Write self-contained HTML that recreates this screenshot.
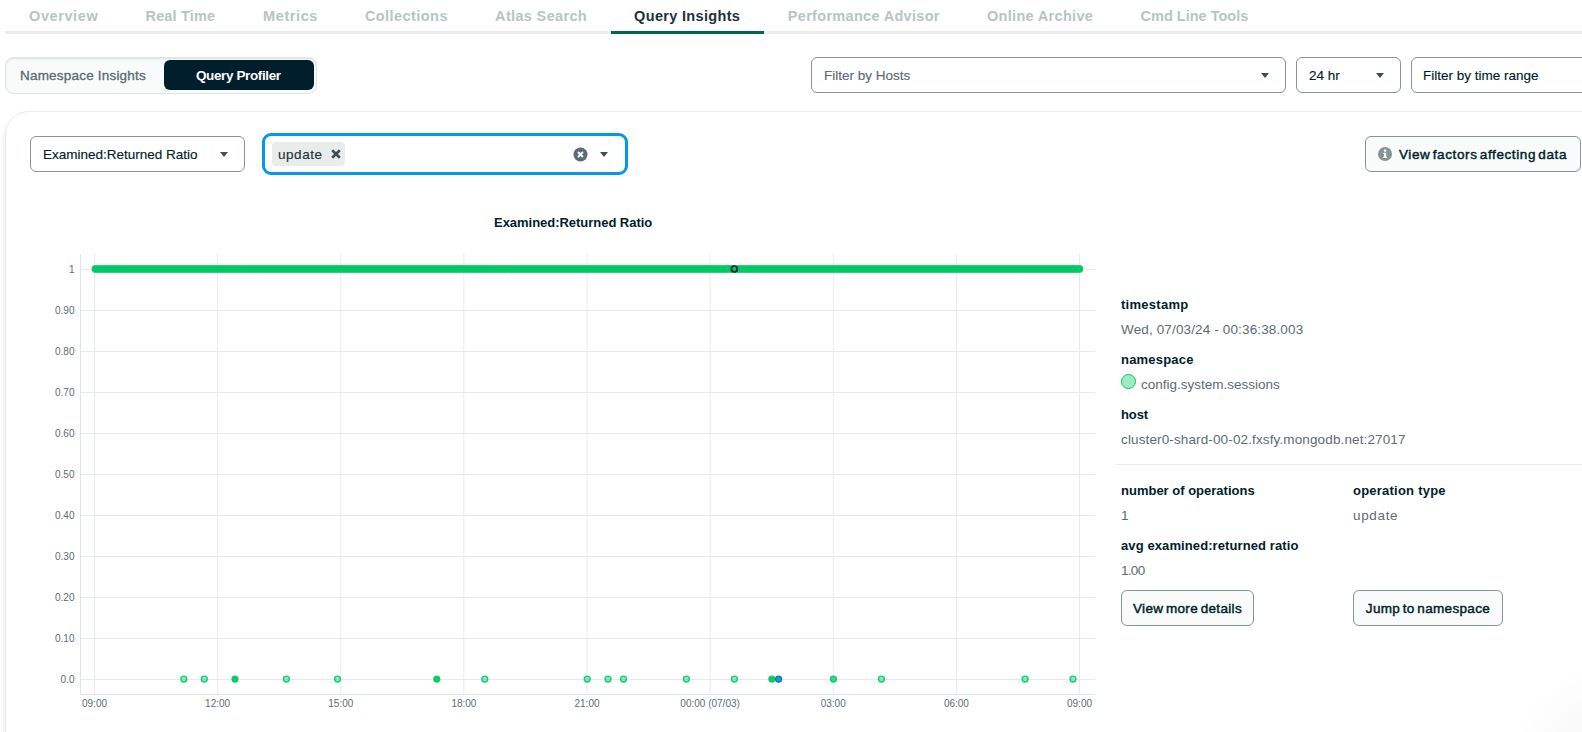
<!DOCTYPE html>
<html lang="en">
<head>
<meta charset="utf-8">
<title>Query Insights</title>
<style>
*{box-sizing:border-box;margin:0;padding:0}
html,body{width:1582px;height:732px;overflow:hidden;background:#fff}
body{font-family:"Liberation Sans",sans-serif;color:#001e2b;position:relative;font-size:13px}
.abs{position:absolute;white-space:nowrap}
.tabline{left:5px;top:31px;width:1577px;height:3px;background:#e8edeb}
.tabactive{left:611px;top:31px;width:153px;height:3px;background:#00684a}
.tab{top:6px;font-size:14.5px;line-height:20px;font-weight:bold;color:#b8c4c2;letter-spacing:-0.2px}
.tab.on{color:#21313c}
.seg{left:5px;top:57px;width:312px;height:37px;border:1px solid #e1e6e4;border-radius:8px;background:#f9fbfa;box-shadow:0 1px 2px rgba(0,30,43,.12) inset}
.segon{left:164px;top:60px;width:150px;height:30px;border-radius:6px;background:#001e2b}
.segt{top:67px;font-size:13.5px;line-height:18px;color:#3d4f58}
.sel{border:1px solid #889397;border-radius:6px;background:#fff;height:36px}
.selt{font-size:13.5px;line-height:18px;color:#5c6c75;-webkit-text-stroke:0.15px currentColor}
.caret{width:0;height:0;border-left:4px solid transparent;border-right:4px solid transparent;border-top:5px solid #3d4f58}
.card{left:5px;top:111px;width:1620px;height:700px;border:1px solid #e8edeb;border-radius:24px;background:#fff;box-shadow:0 4px 10px -4px rgba(0,30,43,.3)}
.chart{position:absolute;left:0;top:240px}
.ax{font-family:"Liberation Sans",sans-serif;font-size:10px;fill:#5c6c75}
.lbl{font-size:13px;line-height:16px;font-weight:bold;color:#001e2b;letter-spacing:0.1px;margin-top:1px}
.val{font-size:13.5px;line-height:16px;color:#5c6c75;margin-top:1px}
.btn{border:1px solid #889397;border-radius:6px;background:#f9fbfa;height:36px;font-size:13.5px;color:#001e2b;line-height:36px;text-align:center;letter-spacing:0.34px;word-spacing:-1.5px;-webkit-text-stroke:0.45px #001e2b}
</style>
</head>
<body>
<!-- tabs -->
<div class="abs tabline"></div>
<div class="abs tabactive"></div>
<div class="abs tab" style="left:29.0px;letter-spacing:0.60px">Overview</div>
<div class="abs tab" style="left:145.5px;letter-spacing:0.16px">Real Time</div>
<div class="abs tab" style="left:263.1px;letter-spacing:0.59px">Metrics</div>
<div class="abs tab" style="left:364.9px;letter-spacing:0.44px">Collections</div>
<div class="abs tab" style="left:495.1px;letter-spacing:0.34px">Atlas Search</div>
<div class="abs tab on" style="left:634.1px;letter-spacing:0.33px">Query Insights</div>
<div class="abs tab" style="left:787.8px;letter-spacing:0.31px">Performance Advisor</div>
<div class="abs tab" style="left:987.0px;letter-spacing:0.31px">Online Archive</div>
<div class="abs tab" style="left:1140.6px;letter-spacing:0.00px">Cmd Line Tools</div>

<!-- segmented control -->
<div class="abs seg"></div>
<div class="abs segon"></div>
<div class="abs segt" style="left:20px;letter-spacing:0.2px;color:#5c6c75;-webkit-text-stroke:0.35px #5c6c75">Namespace Insights</div>
<div class="abs segt" style="left:196px;color:#fff;font-weight:bold;letter-spacing:-0.38px">Query Profiler</div>

<!-- top filters -->
<div class="abs sel" style="left:811px;top:57px;width:475px"></div>
<div class="abs selt" style="left:824px;top:67px">Filter by Hosts</div>
<div class="abs caret" style="left:1261px;top:73px"></div>
<div class="abs sel" style="left:1296px;top:57px;width:105px"></div>
<div class="abs selt" style="left:1309px;top:67px;color:#001e2b">24 hr</div>
<div class="abs caret" style="left:1376px;top:73px"></div>
<div class="abs sel" style="left:1411px;top:57px;width:200px"></div>
<div class="abs selt" style="left:1423px;top:67px;color:#001e2b">Filter by time range</div>

<!-- card -->
<div class="abs card"></div>

<div class="abs sel" style="left:30px;top:136px;width:215px"></div>
<div class="abs selt" style="left:43px;top:146px;color:#001e2b">Examined:Returned Ratio</div>
<div class="abs caret" style="left:220px;top:152px"></div>

<div class="abs" style="left:262px;top:133px;width:366px;height:42px;border:3px solid #0498ec;border-radius:9px;background:#fff"></div>
<div class="abs" style="left:272px;top:142px;width:73px;height:24px;border-radius:4px;background:#e8edeb"></div>
<div class="abs selt" style="left:278px;top:146px;color:#21313c;letter-spacing:0.55px">update</div>
<svg class="abs" style="left:329.5px;top:148.3px" width="12" height="12" viewBox="0 0 12 12"><path d="M2.2 2.2 L9.8 9.8 M9.8 2.2 L2.2 9.8" stroke="#3d4f58" stroke-width="2.7" fill="none"/></svg>
<svg class="abs" style="left:572.5px;top:146.5px" width="15" height="15" viewBox="0 0 15 15"><circle cx="7.5" cy="7.5" r="7" fill="#5c6c75"/><path d="M5 5 L10 10 M10 5 L5 10" stroke="#fff" stroke-width="1.9" fill="none"/></svg>
<div class="abs caret" style="left:600px;top:152px"></div>

<div class="abs btn" style="left:1365px;top:136px;width:216px"></div>
<svg class="abs" style="left:1378px;top:147px" width="14" height="14" viewBox="0 0 14 14"><circle cx="7" cy="7" r="7" fill="#889397"/><rect x="6" y="5.8" width="2.2" height="5" fill="#fff"/><rect x="5" y="5.8" width="2" height="1.2" fill="#fff"/><rect x="5" y="9.8" width="4.2" height="1.2" fill="#fff"/><rect x="5.9" y="2.5" width="2.3" height="2.2" fill="#fff"/></svg>
<div class="abs" style="left:1399px;top:146px;font-size:13.5px;line-height:18px;color:#001e2b;letter-spacing:0.6px;word-spacing:-2px;-webkit-text-stroke:0.45px #001e2b">View factors affecting data</div>

<div class="abs" style="left:494px;top:215px;font-size:13px;line-height:16px;font-weight:bold;color:#001e2b;letter-spacing:-0.03px">Examined:Returned Ratio</div>

<svg class="chart" width="1120" height="490" viewBox="0 240 1120 490">
<g stroke="#e6ebe9" stroke-width="1">
<line x1="94.50" y1="254" x2="94.50" y2="694"/>
<line x1="217.62" y1="254" x2="217.62" y2="694"/>
<line x1="340.75" y1="254" x2="340.75" y2="694"/>
<line x1="463.88" y1="254" x2="463.88" y2="694"/>
<line x1="587.00" y1="254" x2="587.00" y2="694"/>
<line x1="710.12" y1="254" x2="710.12" y2="694"/>
<line x1="833.25" y1="254" x2="833.25" y2="694"/>
<line x1="956.38" y1="254" x2="956.38" y2="694"/>
<line x1="1079.50" y1="254" x2="1079.50" y2="694"/>
<line x1="80" y1="269.5" x2="1095" y2="269.5"/>
<line x1="80" y1="310.5" x2="1095" y2="310.5"/>
<line x1="80" y1="351.5" x2="1095" y2="351.5"/>
<line x1="80" y1="392.5" x2="1095" y2="392.5"/>
<line x1="80" y1="433.5" x2="1095" y2="433.5"/>
<line x1="80" y1="474.5" x2="1095" y2="474.5"/>
<line x1="80" y1="515.5" x2="1095" y2="515.5"/>
<line x1="80" y1="556.5" x2="1095" y2="556.5"/>
<line x1="80" y1="597.5" x2="1095" y2="597.5"/>
<line x1="80" y1="638.5" x2="1095" y2="638.5"/>
<line x1="80" y1="679.5" x2="1095" y2="679.5"/>
</g>
<line x1="80.5" y1="254" x2="80.5" y2="695" stroke="#dfe5e3" stroke-width="1"/>
<line x1="80" y1="694.5" x2="1095" y2="694.5" stroke="#dfe5e3" stroke-width="1"/>
<g class="ax" text-anchor="end">
<text x="74.5" y="273.0">1</text>
<text x="74.5" y="314.0">0.90</text>
<text x="74.5" y="355.0">0.80</text>
<text x="74.5" y="396.0">0.70</text>
<text x="74.5" y="437.0">0.60</text>
<text x="74.5" y="478.0">0.50</text>
<text x="74.5" y="519.0">0.40</text>
<text x="74.5" y="560.0">0.30</text>
<text x="74.5" y="601.0">0.20</text>
<text x="74.5" y="642.0">0.10</text>
<text x="74.5" y="683.0">0.0</text>
</g>
<g class="ax" text-anchor="middle">
<text x="94.5" y="707">09:00</text>
<text x="217.6" y="707">12:00</text>
<text x="340.8" y="707">15:00</text>
<text x="463.9" y="707">18:00</text>
<text x="587.0" y="707">21:00</text>
<text x="710.1" y="707">00:00 (07/03)</text>
<text x="833.2" y="707">03:00</text>
<text x="956.4" y="707">06:00</text>
<text x="1079.5" y="707">09:00</text>
</g>
<line x1="95.4" y1="269" x2="1079.4" y2="269" stroke="#00c864" stroke-width="6" stroke-linecap="round"/>
<g fill="#00c864" fill-opacity="0.6" stroke="#00c864" stroke-width="1.2" stroke-opacity="0.8">
<circle cx="95.4" cy="269" r="3.3"/>
<circle cx="98.4" cy="269" r="3.3"/>
<circle cx="101.4" cy="269" r="3.3"/>
<circle cx="104.4" cy="269" r="3.3"/>
<circle cx="107.4" cy="269" r="3.3"/>
<circle cx="110.4" cy="269" r="3.3"/>
<circle cx="113.4" cy="269" r="3.3"/>
<circle cx="116.4" cy="269" r="3.3"/>
<circle cx="119.4" cy="269" r="3.3"/>
<circle cx="122.4" cy="269" r="3.3"/>
<circle cx="125.4" cy="269" r="3.3"/>
<circle cx="128.4" cy="269" r="3.3"/>
<circle cx="131.4" cy="269" r="3.3"/>
<circle cx="134.4" cy="269" r="3.3"/>
<circle cx="137.4" cy="269" r="3.3"/>
<circle cx="140.4" cy="269" r="3.3"/>
<circle cx="143.4" cy="269" r="3.3"/>
<circle cx="146.4" cy="269" r="3.3"/>
<circle cx="149.4" cy="269" r="3.3"/>
<circle cx="152.4" cy="269" r="3.3"/>
<circle cx="155.4" cy="269" r="3.3"/>
<circle cx="158.4" cy="269" r="3.3"/>
<circle cx="161.4" cy="269" r="3.3"/>
<circle cx="164.4" cy="269" r="3.3"/>
<circle cx="167.4" cy="269" r="3.3"/>
<circle cx="170.4" cy="269" r="3.3"/>
<circle cx="173.4" cy="269" r="3.3"/>
<circle cx="176.4" cy="269" r="3.3"/>
<circle cx="179.4" cy="269" r="3.3"/>
<circle cx="182.4" cy="269" r="3.3"/>
<circle cx="185.4" cy="269" r="3.3"/>
<circle cx="188.4" cy="269" r="3.3"/>
<circle cx="191.4" cy="269" r="3.3"/>
<circle cx="194.4" cy="269" r="3.3"/>
<circle cx="197.4" cy="269" r="3.3"/>
<circle cx="200.4" cy="269" r="3.3"/>
<circle cx="203.4" cy="269" r="3.3"/>
<circle cx="206.4" cy="269" r="3.3"/>
<circle cx="209.4" cy="269" r="3.3"/>
<circle cx="212.4" cy="269" r="3.3"/>
<circle cx="215.4" cy="269" r="3.3"/>
<circle cx="218.4" cy="269" r="3.3"/>
<circle cx="221.4" cy="269" r="3.3"/>
<circle cx="224.4" cy="269" r="3.3"/>
<circle cx="227.4" cy="269" r="3.3"/>
<circle cx="230.4" cy="269" r="3.3"/>
<circle cx="233.4" cy="269" r="3.3"/>
<circle cx="236.4" cy="269" r="3.3"/>
<circle cx="239.4" cy="269" r="3.3"/>
<circle cx="242.4" cy="269" r="3.3"/>
<circle cx="245.4" cy="269" r="3.3"/>
<circle cx="248.4" cy="269" r="3.3"/>
<circle cx="251.4" cy="269" r="3.3"/>
<circle cx="254.4" cy="269" r="3.3"/>
<circle cx="257.4" cy="269" r="3.3"/>
<circle cx="260.4" cy="269" r="3.3"/>
<circle cx="263.4" cy="269" r="3.3"/>
<circle cx="266.4" cy="269" r="3.3"/>
<circle cx="269.4" cy="269" r="3.3"/>
<circle cx="272.4" cy="269" r="3.3"/>
<circle cx="275.4" cy="269" r="3.3"/>
<circle cx="278.4" cy="269" r="3.3"/>
<circle cx="281.4" cy="269" r="3.3"/>
<circle cx="284.4" cy="269" r="3.3"/>
<circle cx="287.4" cy="269" r="3.3"/>
<circle cx="290.4" cy="269" r="3.3"/>
<circle cx="293.4" cy="269" r="3.3"/>
<circle cx="296.4" cy="269" r="3.3"/>
<circle cx="299.4" cy="269" r="3.3"/>
<circle cx="302.4" cy="269" r="3.3"/>
<circle cx="305.4" cy="269" r="3.3"/>
<circle cx="308.4" cy="269" r="3.3"/>
<circle cx="311.4" cy="269" r="3.3"/>
<circle cx="314.4" cy="269" r="3.3"/>
<circle cx="317.4" cy="269" r="3.3"/>
<circle cx="320.4" cy="269" r="3.3"/>
<circle cx="323.4" cy="269" r="3.3"/>
<circle cx="326.4" cy="269" r="3.3"/>
<circle cx="329.4" cy="269" r="3.3"/>
<circle cx="332.4" cy="269" r="3.3"/>
<circle cx="335.4" cy="269" r="3.3"/>
<circle cx="338.4" cy="269" r="3.3"/>
<circle cx="341.4" cy="269" r="3.3"/>
<circle cx="344.4" cy="269" r="3.3"/>
<circle cx="347.4" cy="269" r="3.3"/>
<circle cx="350.4" cy="269" r="3.3"/>
<circle cx="353.4" cy="269" r="3.3"/>
<circle cx="356.4" cy="269" r="3.3"/>
<circle cx="359.4" cy="269" r="3.3"/>
<circle cx="362.4" cy="269" r="3.3"/>
<circle cx="365.4" cy="269" r="3.3"/>
<circle cx="368.4" cy="269" r="3.3"/>
<circle cx="371.4" cy="269" r="3.3"/>
<circle cx="374.4" cy="269" r="3.3"/>
<circle cx="377.4" cy="269" r="3.3"/>
<circle cx="380.4" cy="269" r="3.3"/>
<circle cx="383.4" cy="269" r="3.3"/>
<circle cx="386.4" cy="269" r="3.3"/>
<circle cx="389.4" cy="269" r="3.3"/>
<circle cx="392.4" cy="269" r="3.3"/>
<circle cx="395.4" cy="269" r="3.3"/>
<circle cx="398.4" cy="269" r="3.3"/>
<circle cx="401.4" cy="269" r="3.3"/>
<circle cx="404.4" cy="269" r="3.3"/>
<circle cx="407.4" cy="269" r="3.3"/>
<circle cx="410.4" cy="269" r="3.3"/>
<circle cx="413.4" cy="269" r="3.3"/>
<circle cx="416.4" cy="269" r="3.3"/>
<circle cx="419.4" cy="269" r="3.3"/>
<circle cx="422.4" cy="269" r="3.3"/>
<circle cx="425.4" cy="269" r="3.3"/>
<circle cx="428.4" cy="269" r="3.3"/>
<circle cx="431.4" cy="269" r="3.3"/>
<circle cx="434.4" cy="269" r="3.3"/>
<circle cx="437.4" cy="269" r="3.3"/>
<circle cx="440.4" cy="269" r="3.3"/>
<circle cx="443.4" cy="269" r="3.3"/>
<circle cx="446.4" cy="269" r="3.3"/>
<circle cx="449.4" cy="269" r="3.3"/>
<circle cx="452.4" cy="269" r="3.3"/>
<circle cx="455.4" cy="269" r="3.3"/>
<circle cx="458.4" cy="269" r="3.3"/>
<circle cx="461.4" cy="269" r="3.3"/>
<circle cx="464.4" cy="269" r="3.3"/>
<circle cx="467.4" cy="269" r="3.3"/>
<circle cx="470.4" cy="269" r="3.3"/>
<circle cx="473.4" cy="269" r="3.3"/>
<circle cx="476.4" cy="269" r="3.3"/>
<circle cx="479.4" cy="269" r="3.3"/>
<circle cx="482.4" cy="269" r="3.3"/>
<circle cx="485.4" cy="269" r="3.3"/>
<circle cx="488.4" cy="269" r="3.3"/>
<circle cx="491.4" cy="269" r="3.3"/>
<circle cx="494.4" cy="269" r="3.3"/>
<circle cx="497.4" cy="269" r="3.3"/>
<circle cx="500.4" cy="269" r="3.3"/>
<circle cx="503.4" cy="269" r="3.3"/>
<circle cx="506.4" cy="269" r="3.3"/>
<circle cx="509.4" cy="269" r="3.3"/>
<circle cx="512.4" cy="269" r="3.3"/>
<circle cx="515.4" cy="269" r="3.3"/>
<circle cx="518.4" cy="269" r="3.3"/>
<circle cx="521.4" cy="269" r="3.3"/>
<circle cx="524.4" cy="269" r="3.3"/>
<circle cx="527.4" cy="269" r="3.3"/>
<circle cx="530.4" cy="269" r="3.3"/>
<circle cx="533.4" cy="269" r="3.3"/>
<circle cx="536.4" cy="269" r="3.3"/>
<circle cx="539.4" cy="269" r="3.3"/>
<circle cx="542.4" cy="269" r="3.3"/>
<circle cx="545.4" cy="269" r="3.3"/>
<circle cx="548.4" cy="269" r="3.3"/>
<circle cx="551.4" cy="269" r="3.3"/>
<circle cx="554.4" cy="269" r="3.3"/>
<circle cx="557.4" cy="269" r="3.3"/>
<circle cx="560.4" cy="269" r="3.3"/>
<circle cx="563.4" cy="269" r="3.3"/>
<circle cx="566.4" cy="269" r="3.3"/>
<circle cx="569.4" cy="269" r="3.3"/>
<circle cx="572.4" cy="269" r="3.3"/>
<circle cx="575.4" cy="269" r="3.3"/>
<circle cx="578.4" cy="269" r="3.3"/>
<circle cx="581.4" cy="269" r="3.3"/>
<circle cx="584.4" cy="269" r="3.3"/>
<circle cx="587.4" cy="269" r="3.3"/>
<circle cx="590.4" cy="269" r="3.3"/>
<circle cx="593.4" cy="269" r="3.3"/>
<circle cx="596.4" cy="269" r="3.3"/>
<circle cx="599.4" cy="269" r="3.3"/>
<circle cx="602.4" cy="269" r="3.3"/>
<circle cx="605.4" cy="269" r="3.3"/>
<circle cx="608.4" cy="269" r="3.3"/>
<circle cx="611.4" cy="269" r="3.3"/>
<circle cx="614.4" cy="269" r="3.3"/>
<circle cx="617.4" cy="269" r="3.3"/>
<circle cx="620.4" cy="269" r="3.3"/>
<circle cx="623.4" cy="269" r="3.3"/>
<circle cx="626.4" cy="269" r="3.3"/>
<circle cx="629.4" cy="269" r="3.3"/>
<circle cx="632.4" cy="269" r="3.3"/>
<circle cx="635.4" cy="269" r="3.3"/>
<circle cx="638.4" cy="269" r="3.3"/>
<circle cx="641.4" cy="269" r="3.3"/>
<circle cx="644.4" cy="269" r="3.3"/>
<circle cx="647.4" cy="269" r="3.3"/>
<circle cx="650.4" cy="269" r="3.3"/>
<circle cx="653.4" cy="269" r="3.3"/>
<circle cx="656.4" cy="269" r="3.3"/>
<circle cx="659.4" cy="269" r="3.3"/>
<circle cx="662.4" cy="269" r="3.3"/>
<circle cx="665.4" cy="269" r="3.3"/>
<circle cx="668.4" cy="269" r="3.3"/>
<circle cx="671.4" cy="269" r="3.3"/>
<circle cx="674.4" cy="269" r="3.3"/>
<circle cx="677.4" cy="269" r="3.3"/>
<circle cx="680.4" cy="269" r="3.3"/>
<circle cx="683.4" cy="269" r="3.3"/>
<circle cx="686.4" cy="269" r="3.3"/>
<circle cx="689.4" cy="269" r="3.3"/>
<circle cx="692.4" cy="269" r="3.3"/>
<circle cx="695.4" cy="269" r="3.3"/>
<circle cx="698.4" cy="269" r="3.3"/>
<circle cx="701.4" cy="269" r="3.3"/>
<circle cx="704.4" cy="269" r="3.3"/>
<circle cx="707.4" cy="269" r="3.3"/>
<circle cx="710.4" cy="269" r="3.3"/>
<circle cx="713.4" cy="269" r="3.3"/>
<circle cx="716.4" cy="269" r="3.3"/>
<circle cx="719.4" cy="269" r="3.3"/>
<circle cx="722.4" cy="269" r="3.3"/>
<circle cx="725.4" cy="269" r="3.3"/>
<circle cx="728.4" cy="269" r="3.3"/>
<circle cx="731.4" cy="269" r="3.3"/>
<circle cx="734.4" cy="269" r="3.3"/>
<circle cx="737.4" cy="269" r="3.3"/>
<circle cx="740.4" cy="269" r="3.3"/>
<circle cx="743.4" cy="269" r="3.3"/>
<circle cx="746.4" cy="269" r="3.3"/>
<circle cx="749.4" cy="269" r="3.3"/>
<circle cx="752.4" cy="269" r="3.3"/>
<circle cx="755.4" cy="269" r="3.3"/>
<circle cx="758.4" cy="269" r="3.3"/>
<circle cx="761.4" cy="269" r="3.3"/>
<circle cx="764.4" cy="269" r="3.3"/>
<circle cx="767.4" cy="269" r="3.3"/>
<circle cx="770.4" cy="269" r="3.3"/>
<circle cx="773.4" cy="269" r="3.3"/>
<circle cx="776.4" cy="269" r="3.3"/>
<circle cx="779.4" cy="269" r="3.3"/>
<circle cx="782.4" cy="269" r="3.3"/>
<circle cx="785.4" cy="269" r="3.3"/>
<circle cx="788.4" cy="269" r="3.3"/>
<circle cx="791.4" cy="269" r="3.3"/>
<circle cx="794.4" cy="269" r="3.3"/>
<circle cx="797.4" cy="269" r="3.3"/>
<circle cx="800.4" cy="269" r="3.3"/>
<circle cx="803.4" cy="269" r="3.3"/>
<circle cx="806.4" cy="269" r="3.3"/>
<circle cx="809.4" cy="269" r="3.3"/>
<circle cx="812.4" cy="269" r="3.3"/>
<circle cx="815.4" cy="269" r="3.3"/>
<circle cx="818.4" cy="269" r="3.3"/>
<circle cx="821.4" cy="269" r="3.3"/>
<circle cx="824.4" cy="269" r="3.3"/>
<circle cx="827.4" cy="269" r="3.3"/>
<circle cx="830.4" cy="269" r="3.3"/>
<circle cx="833.4" cy="269" r="3.3"/>
<circle cx="836.4" cy="269" r="3.3"/>
<circle cx="839.4" cy="269" r="3.3"/>
<circle cx="842.4" cy="269" r="3.3"/>
<circle cx="845.4" cy="269" r="3.3"/>
<circle cx="848.4" cy="269" r="3.3"/>
<circle cx="851.4" cy="269" r="3.3"/>
<circle cx="854.4" cy="269" r="3.3"/>
<circle cx="857.4" cy="269" r="3.3"/>
<circle cx="860.4" cy="269" r="3.3"/>
<circle cx="863.4" cy="269" r="3.3"/>
<circle cx="866.4" cy="269" r="3.3"/>
<circle cx="869.4" cy="269" r="3.3"/>
<circle cx="872.4" cy="269" r="3.3"/>
<circle cx="875.4" cy="269" r="3.3"/>
<circle cx="878.4" cy="269" r="3.3"/>
<circle cx="881.4" cy="269" r="3.3"/>
<circle cx="884.4" cy="269" r="3.3"/>
<circle cx="887.4" cy="269" r="3.3"/>
<circle cx="890.4" cy="269" r="3.3"/>
<circle cx="893.4" cy="269" r="3.3"/>
<circle cx="896.4" cy="269" r="3.3"/>
<circle cx="899.4" cy="269" r="3.3"/>
<circle cx="902.4" cy="269" r="3.3"/>
<circle cx="905.4" cy="269" r="3.3"/>
<circle cx="908.4" cy="269" r="3.3"/>
<circle cx="911.4" cy="269" r="3.3"/>
<circle cx="914.4" cy="269" r="3.3"/>
<circle cx="917.4" cy="269" r="3.3"/>
<circle cx="920.4" cy="269" r="3.3"/>
<circle cx="923.4" cy="269" r="3.3"/>
<circle cx="926.4" cy="269" r="3.3"/>
<circle cx="929.4" cy="269" r="3.3"/>
<circle cx="932.4" cy="269" r="3.3"/>
<circle cx="935.4" cy="269" r="3.3"/>
<circle cx="938.4" cy="269" r="3.3"/>
<circle cx="941.4" cy="269" r="3.3"/>
<circle cx="944.4" cy="269" r="3.3"/>
<circle cx="947.4" cy="269" r="3.3"/>
<circle cx="950.4" cy="269" r="3.3"/>
<circle cx="953.4" cy="269" r="3.3"/>
<circle cx="956.4" cy="269" r="3.3"/>
<circle cx="959.4" cy="269" r="3.3"/>
<circle cx="962.4" cy="269" r="3.3"/>
<circle cx="965.4" cy="269" r="3.3"/>
<circle cx="968.4" cy="269" r="3.3"/>
<circle cx="971.4" cy="269" r="3.3"/>
<circle cx="974.4" cy="269" r="3.3"/>
<circle cx="977.4" cy="269" r="3.3"/>
<circle cx="980.4" cy="269" r="3.3"/>
<circle cx="983.4" cy="269" r="3.3"/>
<circle cx="986.4" cy="269" r="3.3"/>
<circle cx="989.4" cy="269" r="3.3"/>
<circle cx="992.4" cy="269" r="3.3"/>
<circle cx="995.4" cy="269" r="3.3"/>
<circle cx="998.4" cy="269" r="3.3"/>
<circle cx="1001.4" cy="269" r="3.3"/>
<circle cx="1004.4" cy="269" r="3.3"/>
<circle cx="1007.4" cy="269" r="3.3"/>
<circle cx="1010.4" cy="269" r="3.3"/>
<circle cx="1013.4" cy="269" r="3.3"/>
<circle cx="1016.4" cy="269" r="3.3"/>
<circle cx="1019.4" cy="269" r="3.3"/>
<circle cx="1022.4" cy="269" r="3.3"/>
<circle cx="1025.4" cy="269" r="3.3"/>
<circle cx="1028.4" cy="269" r="3.3"/>
<circle cx="1031.4" cy="269" r="3.3"/>
<circle cx="1034.4" cy="269" r="3.3"/>
<circle cx="1037.4" cy="269" r="3.3"/>
<circle cx="1040.4" cy="269" r="3.3"/>
<circle cx="1043.4" cy="269" r="3.3"/>
<circle cx="1046.4" cy="269" r="3.3"/>
<circle cx="1049.4" cy="269" r="3.3"/>
<circle cx="1052.4" cy="269" r="3.3"/>
<circle cx="1055.4" cy="269" r="3.3"/>
<circle cx="1058.4" cy="269" r="3.3"/>
<circle cx="1061.4" cy="269" r="3.3"/>
<circle cx="1064.4" cy="269" r="3.3"/>
<circle cx="1067.4" cy="269" r="3.3"/>
<circle cx="1070.4" cy="269" r="3.3"/>
<circle cx="1073.4" cy="269" r="3.3"/>
<circle cx="1076.4" cy="269" r="3.3"/>
<circle cx="1079.4" cy="269" r="3.3"/>
</g>
<circle cx="734.3" cy="268.9" r="2.9" fill="#00c864" stroke="#132436" stroke-width="1.7"/>
<g fill="#00c864" stroke="#00c864" stroke-width="1.4" stroke-opacity="0.9">
<circle cx="183.8" cy="679.1" r="2.95" fill-opacity="0.42"/>
<circle cx="204.3" cy="679.1" r="2.95" fill-opacity="0.42"/>
<circle cx="235" cy="679.1" r="2.95" fill-opacity="0.95"/>
<circle cx="286.4" cy="679.1" r="2.95" fill-opacity="0.42"/>
<circle cx="337.5" cy="679.1" r="2.95" fill-opacity="0.42"/>
<circle cx="436.8" cy="679.1" r="2.95" fill-opacity="0.95"/>
<circle cx="484.8" cy="679.1" r="2.95" fill-opacity="0.42"/>
<circle cx="587.2" cy="679.1" r="2.95" fill-opacity="0.42"/>
<circle cx="608" cy="679.1" r="2.95" fill-opacity="0.42"/>
<circle cx="623.5" cy="679.1" r="2.95" fill-opacity="0.42"/>
<circle cx="686.4" cy="679.1" r="2.95" fill-opacity="0.42"/>
<circle cx="734.4" cy="679.1" r="2.95" fill-opacity="0.42"/>
<circle cx="771.9" cy="679.1" r="2.95" fill-opacity="0.95"/>
<circle cx="833.4" cy="679.1" r="2.95" fill-opacity="0.75"/>
<circle cx="881.4" cy="679.1" r="2.95" fill-opacity="0.42"/>
<circle cx="1025.1" cy="679.1" r="2.95" fill-opacity="0.42"/>
<circle cx="1073" cy="679.1" r="2.95" fill-opacity="0.42"/>
</g>
<circle cx="778.6" cy="679.1" r="3.05" fill="#12a497" stroke="#0a70d8" stroke-width="1.2"/>
</svg>

<!-- right panel -->
<div class="abs lbl" style="left:1121px;top:296px;letter-spacing:0.27px">timestamp</div>
<div class="abs val" style="left:1121px;top:321px;letter-spacing:0.14px">Wed, 07/03/24 - 00:36:38.003</div>
<div class="abs lbl" style="left:1121px;top:351px;letter-spacing:0.2px">namespace</div>
<div class="abs" style="left:1121px;top:374px;width:15px;height:15px;border-radius:50%;background:#9eeac1;border:1px solid #00c864"></div>
<div class="abs val" style="left:1141px;top:376px;letter-spacing:0px">config.system.sessions</div>
<div class="abs lbl" style="left:1121px;top:406px;letter-spacing:-0.1px">host</div>
<div class="abs val" style="left:1121px;top:431px;letter-spacing:0.13px">cluster0-shard-00-02.fxsfy.mongodb.net:27017</div>
<div class="abs" style="left:1116px;top:464px;width:470px;height:1px;background:#e8edeb"></div>
<div class="abs lbl" style="left:1121px;top:482px;letter-spacing:0px">number of operations</div>
<div class="abs val" style="left:1121px;top:507px">1</div>
<div class="abs lbl" style="left:1353px;top:482px;letter-spacing:0.23px">operation type</div>
<div class="abs val" style="left:1353px;top:507px;letter-spacing:0.65px">update</div>
<div class="abs lbl" style="left:1121px;top:537px;letter-spacing:0.1px">avg examined:returned ratio</div>
<div class="abs val" style="left:1121px;top:562px;letter-spacing:-0.7px">1.00</div>
<div class="abs btn" style="left:1121px;top:590px;width:133px">View more details</div>
<div class="abs btn" style="left:1353px;top:590px;width:150px">Jump to namespace</div>
<div class="abs" style="left:1482px;top:632px;width:100px;height:100px;background:radial-gradient(circle at 130px 130px,rgba(0,0,0,.03) 0,rgba(0,0,0,.022) 50px,rgba(0,0,0,0) 100px)"></div>
</body>
</html>
